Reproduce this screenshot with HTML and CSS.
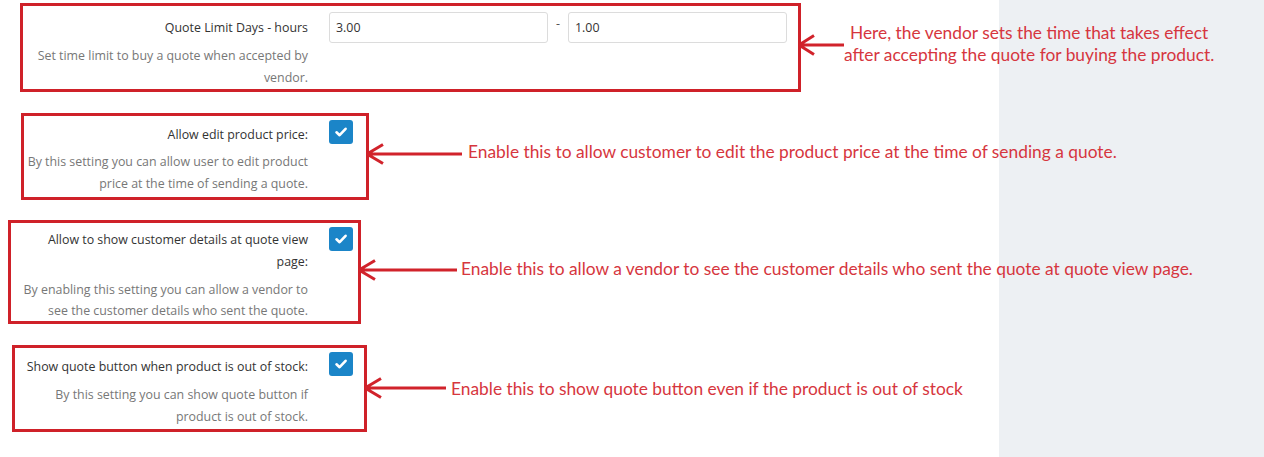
FILE: index.html
```html
<!DOCTYPE html>
<html lang="en">
<head>
<meta charset="utf-8">
<title>Quote settings</title>
<link rel="stylesheet" href="styles.css">
</head>
<body>
<div class="page">
  <div class="row row-1">
    <div class="box box-1">
      <div class="box-label">
        <div class="label">Quote Limit Days - hours</div>
        <div class="desc">Set time limit to buy a quote when accepted by vendor.</div>
      </div>
      <div class="range">
        <input class="field" type="text" value="3.00">
        <span class="dash">-</span>
        <input class="field" type="text" value="1.00">
      </div>
    </div>
    <svg class="arrow arrow-1" width="46" height="26" viewBox="0 0 46 26"><path d="M1 13H46M1 13L16 3.5M1 13L16 22.5" fill="none" stroke="#d1232b" stroke-width="3"/></svg>
    <div class="note note-center">Here, the vendor sets the time that takes effect<br>after accepting the quote for buying the product.</div>
  </div>

  <div class="row row-2">
    <div class="box box-2">
      <div class="box-label">
        <div class="label">Allow edit product price:</div>
        <div class="desc">By this setting you can allow user to edit product price at the time of sending a quote.</div>
      </div>
      <div class="check"><svg width="24" height="24" viewBox="0 0 24 24"><rect width="24" height="24" rx="3" fill="#1b85c8"/><path d="M7.5 12.3L10.6 15.2L16.6 8.8" fill="none" stroke="#fff" stroke-width="2.6" stroke-linecap="round" stroke-linejoin="round"/></svg></div>
    </div>
    <svg class="arrow arrow-2" width="96" height="26" viewBox="0 0 96 26"><path d="M1 13H96M1 13L17 3.5M1 13L17 22.5" fill="none" stroke="#d1232b" stroke-width="3"/></svg>
    <div class="note">Enable this to allow customer to edit the product price at the time of sending a quote.</div>
  </div>

  <div class="row row-3">
    <div class="box box-3">
      <div class="box-label">
        <div class="label">Allow to show customer details at quote view page:</div>
        <div class="desc">By enabling this setting you can allow a vendor to see the customer details who sent the quote.</div>
      </div>
      <div class="check"><svg width="24" height="24" viewBox="0 0 24 24"><rect width="24" height="24" rx="3" fill="#1b85c8"/><path d="M7.5 12.3L10.6 15.2L16.6 8.8" fill="none" stroke="#fff" stroke-width="2.6" stroke-linecap="round" stroke-linejoin="round"/></svg></div>
    </div>
    <svg class="arrow arrow-3" width="99" height="26" viewBox="0 0 99 26"><path d="M1 13H99M1 13L17 3.5M1 13L17 22.5" fill="none" stroke="#d1232b" stroke-width="3"/></svg>
    <div class="note">Enable this to allow a vendor to see the customer details who sent the quote at quote view page.</div>
  </div>

  <div class="row row-4">
    <div class="box box-4">
      <div class="box-label">
        <div class="label">Show quote button when product is out of stock:</div>
        <div class="desc">By this setting you can show quote button if product is out of stock.</div>
      </div>
      <div class="check"><svg width="24" height="24" viewBox="0 0 24 24"><rect width="24" height="24" rx="3" fill="#1b85c8"/><path d="M7.5 12.3L10.6 15.2L16.6 8.8" fill="none" stroke="#fff" stroke-width="2.6" stroke-linecap="round" stroke-linejoin="round"/></svg></div>
    </div>
    <svg class="arrow arrow-4" width="82" height="26" viewBox="0 0 82 26"><path d="M1 13H82M1 13L17 3.5M1 13L17 22.5" fill="none" stroke="#d1232b" stroke-width="3"/></svg>
    <div class="note">Enable this to show quote button even if the product is out of stock</div>
  </div>
</div>
</body>
</html>
```

FILE: styles.css
```css
html, body {
  margin: 0;
  padding: 0;
}
body {
  font-family: "Open Sans", "Noto Sans", sans-serif;
  font-size: 12.4px;
  color: #333;
}
.page {
  width: 1264px;
  height: 457px;
  overflow: hidden;
  background: linear-gradient(90deg, #ffffff 0, #ffffff 999px, #edf0f3 999px, #edf0f3 100%);
}
.row {
  display: flex;
  align-items: center;
}
.row-1 { margin: 3px 0 0 20px; }
.row-2 { margin: 21px 0 0 21px; }
.row-3 { margin: 20px 0 0 8px; }
.row-4 { margin: 21px 0 0 12px; }

.box {
  display: flex;
  align-items: flex-start;
  gap: 21px;
  border: 3px solid #cf2129;
  padding: 8px 0 2px;
  box-sizing: border-box;
  flex: none;
}
.box-1 { width: 781px; padding: 6px 11px 0 0; }
.box-2 { width: 348px; padding-right: 13px; }
.box-3 { width: 353px; padding-right: 5px; padding-top: 6px; padding-bottom: 0; }
.box-4 { width: 355px; padding-right: 11px; padding-bottom: 1px; }

.box-label {
  flex: 1;
  min-width: 0;
  text-align: right;
  line-height: 22px;
}
.box-1 .box-label { padding-top: 5px; }
.box-3 .box-label { padding-left: 7px; }
.label { color: #333; }
.desc {
  color: #777;
  margin-top: 5px;
}
.box-1 .desc { margin-top: 6px; }
.box-3 .desc { line-height: 21px; margin-top: 6px; }
.box-4 .desc { margin-top: 6px; }

.range {
  display: flex;
  align-items: flex-start;
}
.field {
  width: 219px;
  height: 31px;
  box-sizing: border-box;
  border: 1px solid #dcdcdc;
  border-radius: 3px;
  padding: 0 6px;
  font-family: "Open Sans", "Noto Sans", sans-serif;
  font-size: 12.4px;
  color: #333;
  background: #fff;
  outline: none;
}
.dash {
  width: 20px;
  text-align: center;
  line-height: 18px;
  padding-top: 3px;
  color: #555;
}
.check {
  width: 24px;
  height: 24px;
  margin-top: -4px;
}
.box-3 .check { margin-top: -2px; }
.check svg { display: block; }

.arrow {
  flex: none;
  display: block;
  margin-left: -3px;
  margin-bottom: 5px;
}
.note {
  font-family: "Lato", "Liberation Sans", sans-serif;
  font-size: 17.35px;
  color: #d6363e;
  white-space: nowrap;
  margin-bottom: 5px;
}
.row-1 .note { margin-left: 0; margin-bottom: 8px; }
.row-2 .note { margin-left: 6px; margin-bottom: 11px; }
.row-3 .note { margin-left: 4px; margin-bottom: 7px; }
.row-4 .arrow { margin-bottom: 1px; }
.row-4 .note { margin-left: 5px; margin-bottom: 1px; }
.note-center {
  text-align: center;
  line-height: 22px;
}
```
